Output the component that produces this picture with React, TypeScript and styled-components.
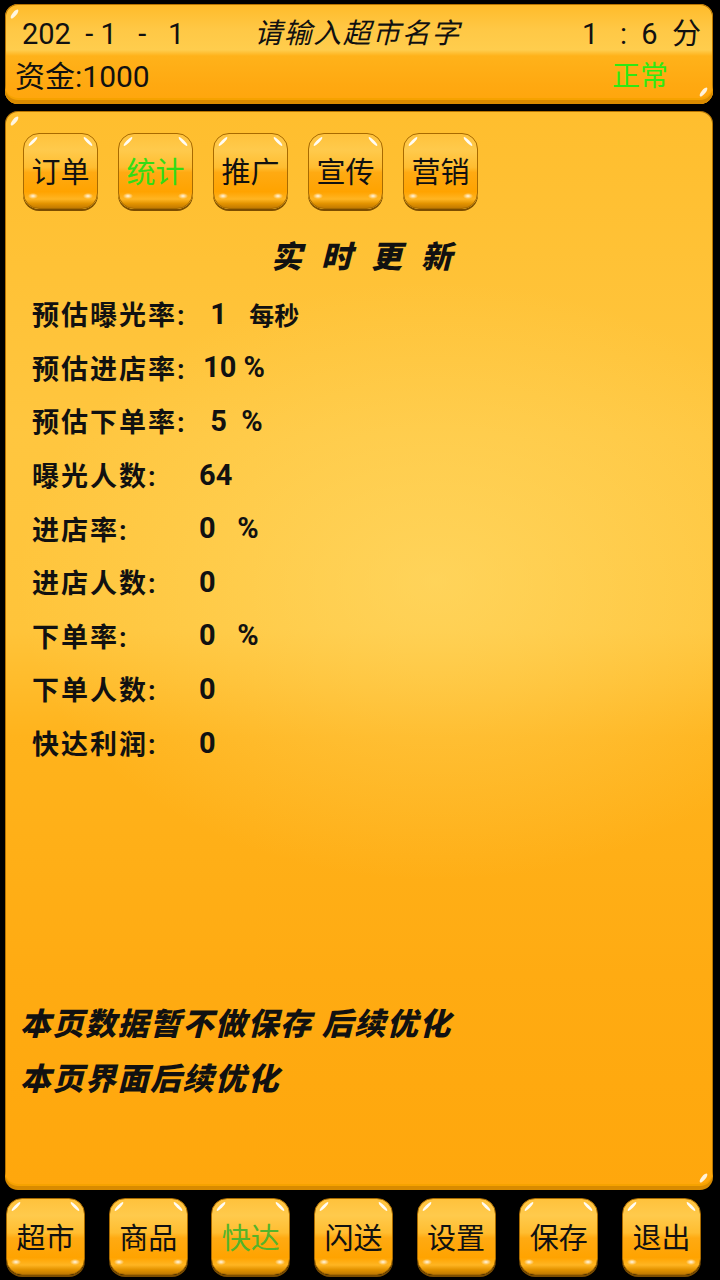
import React from "react";
import styled, { createGlobalStyle } from "styled-components";

const GlobalStyle = createGlobalStyle`
  html, body {
    margin: 0;
    padding: 0;
    background: #000;
  }
  body {
    font-family: Roboto, "Noto Sans CJK SC", sans-serif;
    color: #111;
  }
`;

interface Stat {
  label: string;
  value: string;
  unit?: string;
  wide?: boolean;
}

const stats: Stat[] = [
  { label: "预估曝光率:", value: " 1  ", unit: "每秒", wide: true },
  { label: "预估进店率:", value: "10 %", wide: true },
  { label: "预估下单率:", value: " 5  %", wide: true },
  { label: "曝光人数:", value: "64" },
  { label: "进店率:", value: "0   %" },
  { label: "进店人数:", value: "0" },
  { label: "下单率:", value: "0   %" },
  { label: "下单人数:", value: "0" },
  { label: "快达利润:", value: "0" },
];

const tabs = ["订单", "统计", "推广", "宣传", "营销"];
const navs = ["超市", "商品", "快达", "闪送", "设置", "保存", "退出"];

const App: React.FC = () => {
  return (
    <Screen>
      <GlobalStyle />
      <Header>
        <HeaderTop>
          <DateText>{"202  - 1   -   1"}</DateText>
          <ShopName>请输入超市名字</ShopName>
          <TimeText>{"1   :  6  分"}</TimeText>
        </HeaderTop>
        <HeaderBottom>
          <Money>资金:1000</Money>
          <Status>正常</Status>
        </HeaderBottom>
      </Header>

      <MainPanel>
        <TabRow>
          {tabs.map((t) => (
            <GlossButton key={t} $active={t === "统计"} $activeColor="#33dc14">
              {t}
            </GlossButton>
          ))}
        </TabRow>
        <Title>实时更新</Title>
        <StatList>
          {stats.map((s) => (
            <StatRow key={s.label}>
              <StatLabel $wide={s.wide}>{s.label}</StatLabel>
              <StatValue>{s.value}</StatValue>
              {s.unit && <StatUnit>{s.unit}</StatUnit>}
            </StatRow>
          ))}
        </StatList>
        <Notes>
          <Note>本页数据暂不做保存 后续优化</Note>
          <Note>本页界面后续优化</Note>
        </Notes>
      </MainPanel>

      <NavBar>
        {navs.map((n) => (
          <NavButton key={n} $active={n === "快达"} $activeColor="#55b42a">
            {n}
          </NavButton>
        ))}
      </NavBar>
    </Screen>
  );
};

export default App;

const Screen = styled.div`
  width: 720px;
  height: 1280px;
  background: #000;
  display: flex;
  flex-direction: column;
  padding: 4px 7px 0 5px;
  box-sizing: border-box;
  overflow: hidden;
`;

const Panel = styled.div`
  position: relative;
  border-radius: 13px;
  box-sizing: border-box;
  box-shadow: inset 0 -4px 0 #d98b00, inset 0 -6px 0 #f6a200,
    inset 0 0 0 1px #b87400;
  &::before,
  &::after {
    content: "";
    position: absolute;
    width: 11px;
    height: 4px;
    border-radius: 50%;
    background: rgba(255, 255, 255, 0.85);
  }
  &::before {
    top: 8px;
    left: 4px;
    transform: rotate(-50deg);
  }
  &::after {
    bottom: 10px;
    right: 4px;
    transform: rotate(-50deg);
  }
`;

const Header = styled(Panel)`
  height: 100px;
  padding-top: 12px;
  display: flex;
  flex-direction: column;
  gap: 7px;
  background: linear-gradient(
    180deg,
    #ffbb2a 0%,
    #ffc845 25%,
    #ffcd4d 46%,
    #ffb21a 52%,
    #ffa911 80%,
    #ffa50c 100%
  );
`;

const HeaderTop = styled.div`
  display: grid;
  grid-template-columns: 1fr auto 1fr;
  align-items: center;
  height: 36px;
  padding: 0 12px 0 17px;
  font-size: 29px;
  line-height: 36px;
  white-space: pre;
`;

const DateText = styled.span`
  justify-self: start;
`;

const ShopName = styled.span`
  font-size: 28px;
  font-style: italic;
  letter-spacing: 1.5px;
  margin-right: 8px;
`;

const TimeText = styled.span`
  justify-self: end;
`;

const HeaderBottom = styled.div`
  display: flex;
  justify-content: space-between;
  align-items: center;
  height: 36px;
  padding: 0 45px 0 10px;
  font-size: 30px;
  line-height: 36px;
`;

const Money = styled.span``;

const Status = styled.span`
  font-size: 28px;
  color: #2eea12;
`;

const MainPanel = styled(Panel)`
  margin-top: 7px;
  height: 1079px;
  display: flex;
  flex-direction: column;
  padding: 22px 0 0 0;
  background: radial-gradient(
      ellipse 420px 300px at 430px 470px,
      rgba(255, 226, 120, 0.5) 0%,
      rgba(255, 220, 100, 0) 100%
    ),
    linear-gradient(
      180deg,
      #ffbe2e 0%,
      #ffc63f 30%,
      #ffc43a 48%,
      #ffb31c 58%,
      #ffab12 80%,
      #ffa70c 100%
    );
`;

const TabRow = styled.div`
  display: flex;
  gap: 20px;
  padding-left: 18px;
`;

const GlossButton = styled.div<{ $active?: boolean; $activeColor: string }>`
  position: relative;
  width: 75px;
  height: 76px;
  box-sizing: border-box;
  display: flex;
  align-items: center;
  justify-content: center;
  padding-bottom: 2px;
  border-radius: 16px;
  border: 1.5px solid #a86a00;
  font-size: 29px;
  color: ${(p) => (p.$active ? p.$activeColor : "#111")};
  background: radial-gradient(
      ellipse 5px 3px at 9px calc(100% - 12px),
      rgba(255, 255, 255, 0.9),
      rgba(255, 255, 255, 0)
    ),
    radial-gradient(
      ellipse 5px 3px at calc(100% - 9px) calc(100% - 12px),
      rgba(255, 255, 255, 0.9),
      rgba(255, 255, 255, 0)
    ),
    linear-gradient(
      180deg,
      #ffc23c 0%,
      #ffca4c 22%,
      #ffbd30 45%,
      #ffaa12 52%,
      #ffa300 78%,
      #ffb522 88%,
      #e39300 94%,
      #c27a00 100%
    );
  box-shadow: 0 2px 0 #7c4d00;
  &::before,
  &::after {
    content: "";
    position: absolute;
    top: 6px;
    width: 12px;
    height: 3px;
    border-radius: 50%;
    background: rgba(255, 255, 255, 0.95);
  }
  &::before {
    left: 3px;
    transform: rotate(-45deg);
  }
  &::after {
    right: 3px;
    transform: rotate(45deg);
  }
`;

const Title = styled.div`
  margin-top: 27px;
  height: 44px;
  line-height: 44px;
  text-align: center;
  font-size: 31px;
  font-weight: 900;
  font-style: italic;
  letter-spacing: 19px;
  padding-left: 24px;
`;

const StatList = styled.div`
  margin-top: 7px;
  padding-left: 27px;
  display: flex;
  flex-direction: column;
`;

const StatRow = styled.div`
  display: flex;
  align-items: center;
  height: 53.6px;
  font-weight: bold;
`;

const StatLabel = styled.span<{ $wide?: boolean }>`
  min-width: ${(p) => (p.$wide ? "171px" : "167px")};
  font-size: 27px;
  letter-spacing: 2px;
`;

const StatValue = styled.span`
  white-space: pre;
  font-size: 29px;
`;

const StatUnit = styled.span`
  font-size: 25px;
  margin-left: 8px;
`;

const Notes = styled.div`
  margin-top: auto;
  padding: 0 0 83px 15px;
  display: flex;
  flex-direction: column;
`;

const Note = styled.div`
  height: 55px;
  line-height: 55px;
  font-size: 31px;
  font-weight: 900;
  font-style: italic;
  letter-spacing: 1.5px;
`;

const NavBar = styled.div`
  display: flex;
  justify-content: space-between;
  margin-top: 8px;
  padding: 0 12px 0 1px;
`;

const NavButton = styled(GlossButton)`
  width: 79px;
  height: 77px;
`;
